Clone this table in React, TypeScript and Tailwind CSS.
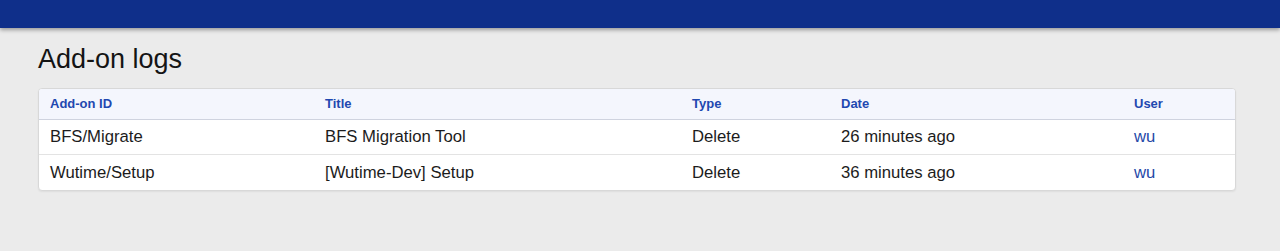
const logs = [
  { id: 'BFS/Migrate', title: 'BFS Migration Tool', type: 'Delete', date: '26 minutes ago', user: 'wu' },
  { id: 'Wutime/Setup', title: '[Wutime-Dev] Setup', type: 'Delete', date: '36 minutes ago', user: 'wu' },
]

const cols = 'grid grid-cols-[286px_367px_149px_293px_1fr]'

export default function App() {
  return (
    <div className="min-h-[251px] bg-[#ebebeb] font-['Liberation_Sans',Arial,sans-serif]">
      <div className="h-[28px] bg-[#0f2f8a] shadow-[0_2px_4px_rgba(0,0,0,0.35)]" />
      <div className="px-[38px] pt-[15px]">
        <h1 className="text-[27px] leading-[32px] text-[#141414]">Add-on logs</h1>
        <div className="mt-[13px] w-[1198px] rounded-[4px] border border-[#d8d8d8] bg-white overflow-hidden shadow-[0_1px_2px_rgba(0,0,0,0.06)]">
          <div className={`${cols} h-[31px] items-center bg-[#f4f6fd] border-b border-[#cfd3df] text-[13px] font-bold text-[#1f48b0]`}>
            <div className="pl-[11px]">Add-on ID</div>
            <div>Title</div>
            <div>Type</div>
            <div>Date</div>
            <div>User</div>
          </div>
          {logs.map((log, i) => (
            <div
              key={log.id}
              className={`${cols} h-[35px] items-center text-[16.7px] text-[#1c1c1c] ${i < logs.length - 1 ? 'border-b border-[#e3e3e3]' : ''}`}
            >
              <div className="pl-[11px]">{log.id}</div>
              <div>{log.title}</div>
              <div>{log.type}</div>
              <div>{log.date}</div>
              <div className="text-[#2448a8]">{log.user}</div>
            </div>
          ))}
        </div>
      </div>
    </div>
  )
}
